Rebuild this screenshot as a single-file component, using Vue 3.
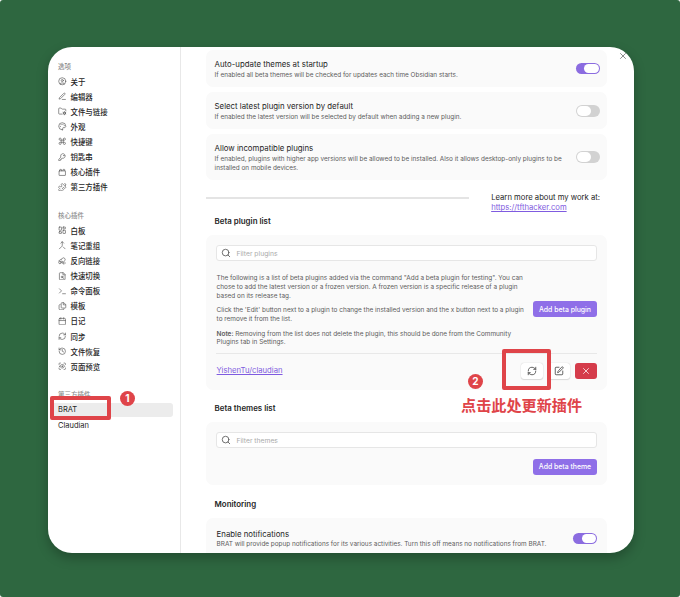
<script setup>
const icons = {
  user: '<circle cx="12" cy="12" r="10"/><circle cx="12" cy="10" r="3"/><path d="M7 20.6V19a2 2 0 0 1 2-2h6a2 2 0 0 1 2 2v1.6"/>',
  pen: '<path d="M12 21h9M16.400 3.600a1.900 1.900 0 0 1 3 3L7.400 18.600a2 2 0 0 1-.9.500l-3.500 1 1-3.600a2 2 0 0 1 .5-.9z"/>',
  folder: '<path d="M10.500 20H4a2 2 0 0 1-2-2V5a2 2 0 0 1 2-2h3.900a2 2 0 0 1 1.700.9l.8 1.200a2 2 0 0 0 1.700.9H20a2 2 0 0 1 2 2v3"/><circle cx="18" cy="17.500" r="3"/><path d="M18 13v1.500M18 20.500V22M14 15.200l1.400.8M20.600 19l1.400.8M14 19.800l1.400-.8M20.600 16l1.400-.8"/>',
  palette: '<path d="M12 22a10 10 0 1 1 10-10c0 2.800-2.200 4-5 4h-2.200a1.800 1.800 0 0 0-1.400 2.800l.3.400A1.800 1.800 0 0 1 12 22z"/><g stroke-width="1"><circle cx="13.500" cy="6.500" r=".5"/><circle cx="17.500" cy="10.500" r=".5"/><circle cx="6.500" cy="12.500" r=".5"/><circle cx="8.500" cy="7.500" r=".5"/></g>',
  command: '<path d="M15 6v12a3 3 0 1 0 3-3H6a3 3 0 1 0 3 3V6a3 3 0 1 0-3 3h12a3 3 0 1 0-3-3"/>',
  key: '<path d="M2.600 17.400A2 2 0 0 0 2 18.800V21a1 1 0 0 0 1 1h3v-3h3v-3h1.200l1.400-1.400a6.500 6.500 0 1 0-4-4z"/><circle cx="16.500" cy="7.500" r=".5"/>',
  brick: '<rect width="18" height="13" x="3" y="8" rx="1"/><path d="M10 8V5a1 1 0 0 0-1-1H6a1 1 0 0 0-1 1v3M19 8V5a1 1 0 0 0-1-1h-3a1 1 0 0 0-1 1v3"/>',
  puzzle: '<path d="M19.439 7.850c-.049.322.059.648.289.878l1.568 1.568c.47.470.706 1.087.706 1.704s-.235 1.233-.706 1.704l-1.611 1.611a.98.98 0 0 1-.837.276c-.470-.070-.802-.480-.968-.925a2.501 2.501 0 1 0-3.214 3.214c.446.166.855.497.925.968a.979.979 0 0 1-.276.837l-1.610 1.610a2.404 2.404 0 0 1-1.705.707 2.402 2.402 0 0 1-1.704-.706l-1.568-1.568a1.026 1.026 0 0 0-.877-.290c-.493.074-.840.504-1.020.968a2.500 2.500 0 1 1-3.237-3.237c.464-.180.894-.527.967-1.020a1.026 1.026 0 0 0-.289-.877l-1.568-1.568A2.402 2.402 0 0 1 1.998 12c0-.617.236-1.234.706-1.704L4.230 8.770c.240-.240.581-.353.917-.303.515.077.877.528 1.073 1.010a2.500 2.500 0 1 0 3.259-3.259c-.482-.196-.933-.558-1.010-1.073-.050-.336.062-.676.303-.917l1.525-1.525A2.402 2.402 0 0 1 12 1.998c.617 0 1.234.236 1.704.706l1.568 1.568c.230.230.556.338.877.290.493-.074.840-.504 1.020-.968a2.500 2.500 0 1 1 3.237 3.237c-.464.180-.894.527-.967 1.020Z"/>',
  dashboard: '<rect width="7" height="9" x="3" y="3" rx="1"/><rect width="7" height="5" x="14" y="3" rx="1"/><rect width="7" height="9" x="14" y="12" rx="1"/><rect width="7" height="5" x="3" y="16" rx="1"/>',
  merge: '<path d="m8 6 4-4 4 4M12 2v10.300a4 4 0 0 1-1.200 2.900L4 22M20 22l-5-5"/>',
  backlink: '<path d="m9 7 3-3a4.500 4.500 0 0 1 7 6l-2 2M14 13a4 4 0 0 0-5.500-1M2 11l8-5M12 17h9M17 13l-4 4 4 4"/><circle cx="5.500" cy="15.500" r="3.500"/>',
  search: '<path d="M14 2H6a2 2 0 0 0-2 2v16a2 2 0 0 0 2 2h12a2 2 0 0 0 2-2V8z"/><path d="M14 2v6h6"/><circle cx="11.500" cy="14" r="2.500"/><path d="m13.300 15.800 2.700 2.700"/>',
  terminal: '<path d="m4 17 6-6-6-6M13 19h8"/>',
  files: '<path d="M15 2h-4a2 2 0 0 0-2 2v11a2 2 0 0 0 2 2h9a2 2 0 0 0 2-2V8zM15 2v6h6M6 7a3 3 0 0 0-3 3v9a3 3 0 0 0 3 3h8a3 3 0 0 0 3-3"/>',
  calendar: '<rect width="18" height="18" x="3" y="4" rx="2"/><path d="M8 2v4M16 2v4M3 10h18"/>',
  sync: '<path d="M3 12a9 9 0 0 1 9-9 9.750 9.750 0 0 1 6.740 2.740L21 8M21 3v5h-5M21 12a9 9 0 0 1-9 9 9.750 9.750 0 0 1-6.740-2.740L3 16M8 16H3v5"/>',
  history: '<path d="M3 12a9 9 0 1 0 9-9 9.750 9.750 0 0 0-6.740 2.740L3 8M3 3v5h5M12 7v5l4 2"/>',
  preview: '<path d="M3 7V5a2 2 0 0 1 2-2h2M17 3h2a2 2 0 0 1 2 2v2M21 17v2a2 2 0 0 1-2 2h-2M7 21H5a2 2 0 0 1-2-2v-2M5 12s2.500-5 7-5 7 5 7 5-2.500 5-7 5-7-5-7-5z"/><circle cx="12" cy="12" r="1.500"/>',
  magnifier: '<circle cx="11" cy="11" r="8"/><path d="m21 21-4.300-4.300"/>',
  edit: '<path d="M12 3H5a2 2 0 0 0-2 2v14a2 2 0 0 0 2 2h14a2 2 0 0 0 2-2v-7"/><path d="M18.400 2.600a2.100 2.100 0 0 1 3 3l-9 9a2 2 0 0 1-.9.500l-2.900.9.900-2.900a2 2 0 0 1 .5-.9z"/>',
  close: '<path d="M18 6 6 18M6 6l12 12"/>'
}

const options = [
  ['user', '关于'], ['pen', '编辑器'], ['folder', '文件与链接'], ['palette', '外观'],
  ['command', '快捷键'], ['key', '钥匙串'], ['brick', '核心插件'], ['puzzle', '第三方插件']
]
const core = [
  ['dashboard', '白板'], ['merge', '笔记重组'], ['backlink', '反向链接'], ['search', '快速切换'],
  ['terminal', '命令面板'], ['files', '模板'], ['calendar', '日记'], ['sync', '同步'],
  ['history', '文件恢复'], ['preview', '页面预览']
]
</script>

<template>
  <div class="desktop">
    <div class="window">
      <aside class="sidebar">
        <h3 class="group">选项</h3>
        <div v-for="[icon, label] in options" :key="label" class="item">
          <svg viewBox="0 0 24 24" v-html="icons[icon]" /><span>{{ label }}</span>
        </div>
        <h3 class="group second">核心插件</h3>
        <div v-for="[icon, label] in core" :key="label" class="item">
          <svg viewBox="0 0 24 24" v-html="icons[icon]" /><span>{{ label }}</span>
        </div>
        <h3 class="group third">第三方插件</h3>
        <div class="item latin active">BRAT</div>
        <div class="item latin">Claudian</div>
      </aside>

      <main class="content">
        <section class="card setting first">
          <div>
            <div class="name">Auto-update themes at startup</div>
            <div class="desc">If enabled all beta themes will be checked for updates each time Obsidian starts.</div>
          </div>
          <span class="toggle on"><i /></span>
        </section>
        <section class="card setting">
          <div>
            <div class="name">Select latest plugin version by default</div>
            <div class="desc">If enabled the latest version will be selected by default when adding a new plugin.</div>
          </div>
          <span class="toggle"><i /></span>
        </section>
        <section class="card setting tall">
          <div>
            <div class="name">Allow incompatible plugins</div>
            <div class="desc">If enabled, plugins with higher app versions will be allowed to be installed. Also it allows desktop-only plugins to be<br>installed on mobile devices.</div>
          </div>
          <span class="toggle"><i /></span>
        </section>

        <div class="about">
          <hr>
          <div class="more">Learn more about my work at:<br><a>https://tfthacker.com</a></div>
        </div>

        <h2>Beta plugin list</h2>
        <section class="card list plugins">
          <div class="filter"><svg viewBox="0 0 24 24" v-html="icons.magnifier" /><span>Filter plugins</span></div>
          <div class="info">
            <div class="copy">
              <p>The following is a list of beta plugins added via the command "Add a beta plugin for testing". You can<br>chose to add the latest version or a frozen version. A frozen version is a specific release of a plugin<br>based on its release tag.</p>
              <p>Click the 'Edit' button next to a plugin to change the installed version and the x button next to a plugin<br>to remove it from the list.</p>
              <p><b>Note:</b> Removing from the list does not delete the plugin, this should be done from the Community<br>Plugins tab in Settings.</p>
            </div>
            <button class="cta">Add beta plugin</button>
          </div>
          <div class="entry">
            <a>YishenTu/claudian</a>
            <div class="actions">
              <button class="tool"><svg viewBox="0 0 24 24" v-html="icons.sync" /></button>
              <button class="tool"><svg viewBox="0 0 24 24" v-html="icons.edit" /></button>
              <button class="tool danger"><svg viewBox="0 0 24 24" v-html="icons.close" /></button>
            </div>
          </div>
        </section>

        <h2 class="themes-title">Beta themes list</h2>
        <section class="card list themes">
          <div class="filter"><svg viewBox="0 0 24 24" v-html="icons.magnifier" /><span>Filter themes</span></div>
          <button class="cta theme">Add beta theme</button>
        </section>

        <h2 class="monitor-title">Monitoring</h2>
        <section class="card setting monitor">
          <div>
            <div class="name">Enable notifications</div>
            <div class="desc">BRAT will provide popup notifications for its various activities. Turn this off means no notifications from BRAT.</div>
          </div>
          <span class="toggle on"><i /></span>
        </section>
      </main>
      <svg class="close" viewBox="0 0 24 24" v-html="icons.close" />
    </div>

    <div class="frame frame-one" />
    <div class="badge badge-one">1</div>
    <div class="frame frame-two" />
    <div class="badge badge-two">2</div>
    <div class="callout">点击此处更新插件</div>
  </div>
</template>

<style>
body { margin: 0; background: #fff; }
</style>

<style scoped>
* { box-sizing: border-box; }
.desktop {
  position: relative;
  width: 680px;
  height: 597px;
  padding: 47px 46px 44px 48px;
  overflow: hidden;
  border-radius: 3px;
  background: #2e6740;
  font-family: Inter, "Noto Sans CJK SC", sans-serif;
  color: #252525;
}
svg { fill: none; stroke: currentColor; stroke-width: 1.8; stroke-linecap: round; stroke-linejoin: round; flex: none; }
.window {
  position: relative;
  display: flex;
  width: 586px;
  height: 506px;
  overflow: hidden;
  border-radius: 24px;
  background: #fff;
}
.desktop::before {
  content: "";
  position: absolute;
  left: 48px;
  top: 47px;
  width: 586px;
  height: 506px;
  border-radius: 24px;
  box-shadow: 0 5px 12px rgba(0, 0, 0, .26);
}
.sidebar { width: 133px; flex: none; padding: 12.500px 7px 0 2px; border-right: 1px solid #e8e8e8; }
.group { height: 14.500px; margin: 0 0 0 8px; font-size: 6.500px; line-height: 15px; font-weight: 500; color: #8c8c8c; white-space: nowrap; }
.second { margin-top: 14.300px; }
.third { margin-top: 14.700px; }
.item {
  display: flex;
  align-items: center;
  gap: 4px;
  height: 15.050px;
  padding-left: 8px;
  border-radius: 3px;
  font-size: 7.450px;
  font-weight: 500;
  white-space: nowrap;
}
.item svg { width: 8.500px; height: 8.500px; color: #555; }
.latin { font-weight: 400; font-size: 7.500px; }
.active { height: 14px; margin-bottom: 1px; background: #ececec; }
.content { width: 401px; margin-left: 25px; flex: none; }
.card { border-radius: 7px; background: #fafafa; }
.setting { display: flex; justify-content: space-between; align-items: center; height: 37.500px; margin-bottom: 4.800px; padding: .5px 7.500px 0 8.600px; }
.first { margin-top: 2.500px; }
.tall { height: 45.500px; margin-bottom: 0; }
.name { margin-top: 1.200px; margin-bottom: .8px; font-size: 7.820px; line-height: 11px; white-space: nowrap; }
.desc { font-size: 6.400px; line-height: 8.600px; color: #5c5c5c; white-space: nowrap; }
.toggle { display: flex; width: 24px; height: 11.500px; flex: none; padding: 1px; border-radius: 6px; background: #d2d2d2; }
.toggle i { width: 14.500px; border-radius: 5px; background: #fff; }
.on { justify-content: flex-end; background: #8b6ce0; }
.about { display: flex; justify-content: space-between; height: 33px; padding: 13px 7px 0 0; }
hr { width: 263px; height: 2px; margin: 4px 0 0; border: 0; background: #e4e4e4; }
.more { font-size: 7.700px; line-height: 10.500px; white-space: nowrap; }
a { color: #7f5be0; text-decoration: underline; text-underline-offset: 1px; }
h2 { height: 12px; margin: 2.500px 0 8px 8.600px; font-size: 7.900px; line-height: 12px; font-weight: 600; }
.list { padding: 9.500px 10px 0; }
.plugins { height: 154.500px; }
.filter { display: flex; align-items: center; gap: 5.500px; height: 16.500px; flex: none; padding: 1px 0 0 4px; border: 1px solid #e6e6e6; border-radius: 3px; background: #fff; color: #aaa; font-size: 6.750px; }
.filter svg { width: 10px; height: 10px; color: #555; stroke-width: 2; }
.info { display: flex; align-items: center; justify-content: space-between; height: 92.500px; padding-top: 5px; border-bottom: 1px solid #e8e8e8; }
.copy { padding: 2.500px 0 0 .6px; }
p { margin: 0 0 6.200px; font-size: 6.430px; line-height: 8.600px; color: #5c5c5c; white-space: nowrap; }
p:last-child { margin: 0; }
b { font-weight: 600; }
button { padding: 0; border: 0; font-family: inherit; }
.cta { width: 64px; height: 16px; flex: none; border-radius: 3px; background: #8f6fe8; color: #fff; font-size: 6.900px; font-weight: 500; white-space: nowrap; }
.entry { display: flex; align-items: center; justify-content: space-between; height: 34px; padding-left: .6px; font-size: 7.700px; }
.actions { display: flex; gap: 4.500px; }
.tool { display: flex; align-items: center; justify-content: center; width: 22.500px; height: 16px; border-radius: 3px; background: #fff; box-shadow: 0 0 1px #bbb, 0 1px 1px #ddd; color: #333; }
.tool svg { width: 10px; height: 10px; }
.danger { background: #d53c4b; color: #fff; box-shadow: none; }
.themes-title { margin-top: 12.500px; }
.themes { display: flex; flex-direction: column; height: 63px; }
.theme { align-self: flex-end; margin-top: 10.500px; }
.monitor-title { margin-top: 12.700px; }
.monitor { height: 41px; padding: 0 10px 0 10.600px; }
.close { position: absolute; top: 3.500px; right: 6px; width: 10px; height: 10px; color: #666; }
.frame { position: absolute; border: 4px solid #df4449; border-radius: 2px; }
.frame-one { left: 50px; top: 396px; width: 61px; height: 24px; }
.frame-two { left: 502px; top: 349px; width: 49px; height: 41px; }
.badge { position: absolute; width: 15px; height: 15px; border-radius: 50%; background: #df4449; color: #fff; font-size: 10px; line-height: 15px; font-weight: 700; text-align: center; }
.badge-one { left: 120px; top: 391px; }
.badge-two { left: 468px; top: 374px; }
.callout { position: absolute; left: 461px; top: 395px; color: #df4449; font-size: 15.150px; line-height: 22px; font-weight: 700; white-space: nowrap; }
</style>
